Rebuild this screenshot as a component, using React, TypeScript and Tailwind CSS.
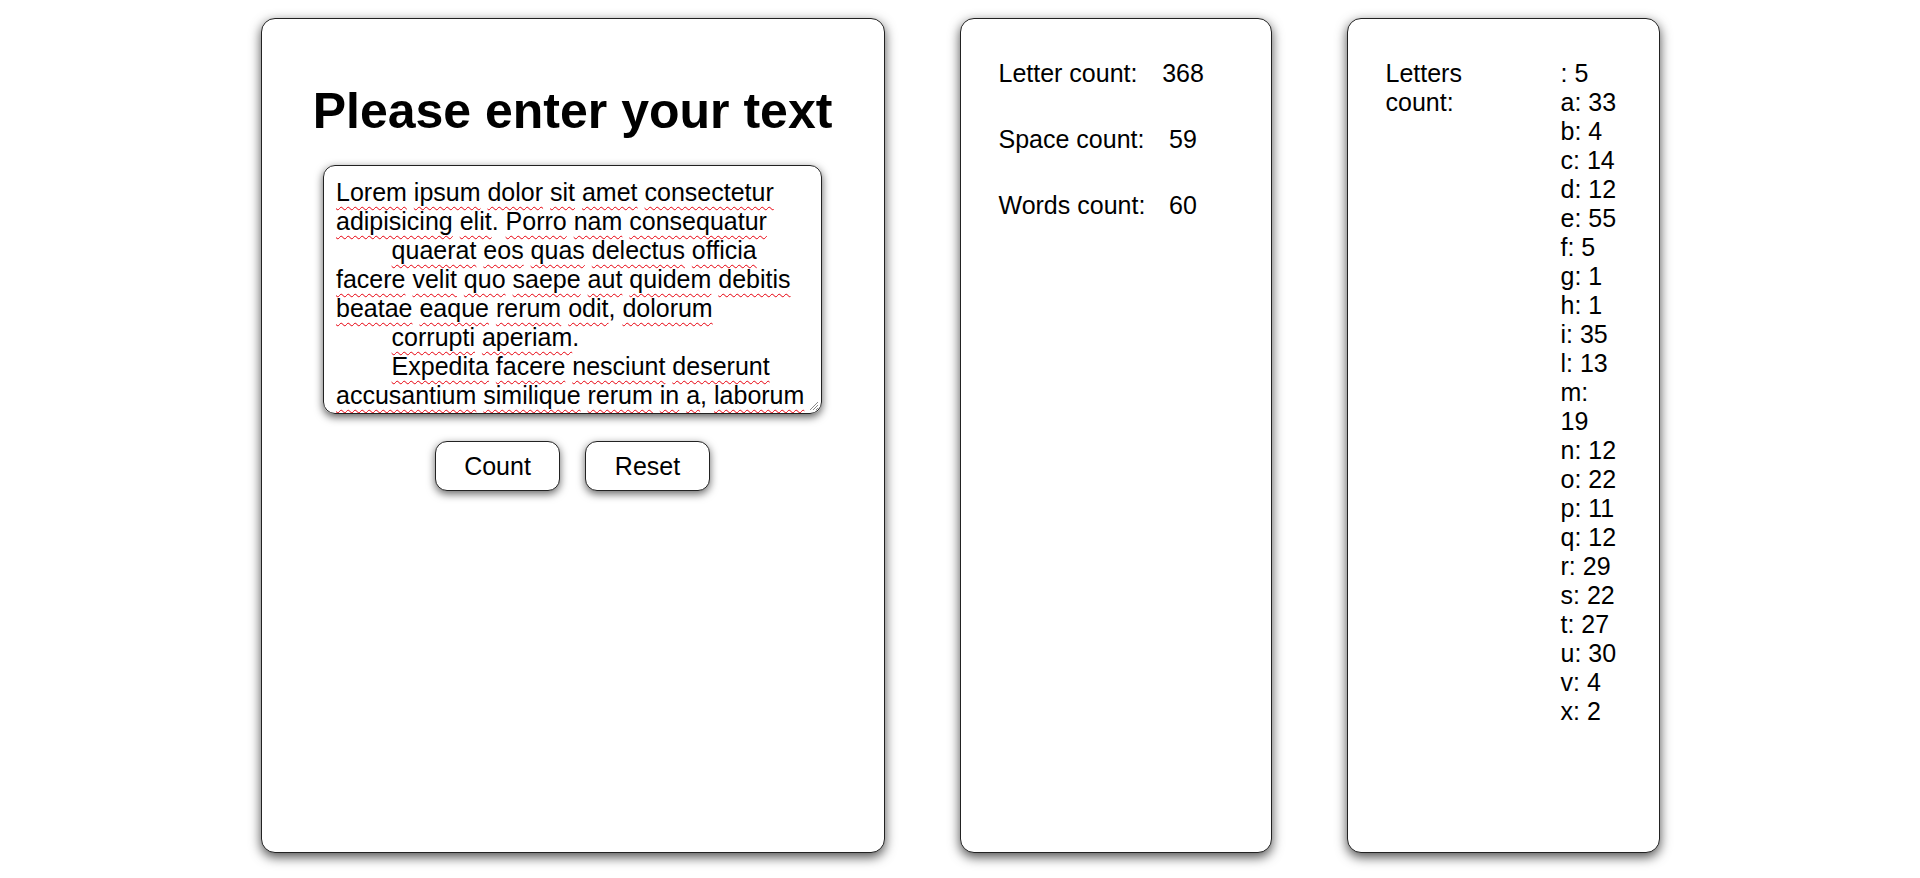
import { useState } from 'react';

const SAMPLE = `Lorem ipsum dolor sit amet consectetur adipisicing elit. Porro nam consequatur
        quaerat eos quas delectus officia facere velit quo saepe aut quidem debitis beatae eaque rerum odit, dolorum
        corrupti aperiam.
        Expedita facere nesciunt deserunt accusantium similique rerum in a, laborum vitae ad
        voluptatibus excepturi maxime explicabo.`;

type Counts = {
  letters: number;
  spaces: number;
  words: number;
  perLetter: [string, number][];
};

const INITIAL: Counts = {
  letters: 368,
  spaces: 59,
  words: 60,
  perLetter: [
    ['', 5],
    ['a', 33],
    ['b', 4],
    ['c', 14],
    ['d', 12],
    ['e', 55],
    ['f', 5],
    ['g', 1],
    ['h', 1],
    ['i', 35],
    ['l', 13],
    ['m', 19],
    ['n', 12],
    ['o', 22],
    ['p', 11],
    ['q', 12],
    ['r', 29],
    ['s', 22],
    ['t', 27],
    ['u', 30],
    ['v', 4],
    ['x', 2],
  ],
};

function countText(text: string): Counts {
  const map = new Map<string, number>();
  for (const ch of text.toLowerCase()) {
    if (/[a-z]/.test(ch)) map.set(ch, (map.get(ch) ?? 0) + 1);
  }
  const perLetter = [...map.entries()].sort((a, b) => a[0].localeCompare(b[0]));
  return {
    letters: perLetter.reduce((s, [, n]) => s + n, 0),
    spaces: (text.match(/ /g) ?? []).length,
    words: text.split(/\s+/).filter(Boolean).length,
    perLetter,
  };
}

// words get the red spell-check squiggle, punctuation and whitespace don't
function Squiggly({ text }: { text: string }) {
  const parts = text.split(/(\s+)/);
  return (
    <>
      {parts.map((part, i) => {
        if (/^\s*$/.test(part)) return <span key={i}>{part}</span>;
        const m = part.match(/^([A-Za-z]+)(.*)$/);
        if (!m) return <span key={i}>{part}</span>;
        return (
          <span key={i}>
            <span className="underline decoration-wavy decoration-red-600 decoration-1 underline-offset-[5px]">
              {m[1]}
            </span>
            {m[2]}
          </span>
        );
      })}
    </>
  );
}

export default function App() {
  const [results, setResults] = useState<Counts | null>(INITIAL);

  return (
    <div className="min-h-screen bg-white font-['Liberation_Sans',Arial,sans-serif] text-[25px] leading-[29px] text-black">
      <div className="flex justify-center gap-[75px] pt-[18px]">
        <section className="flex h-[835px] w-[624px] flex-col items-center rounded-[14px] border border-[#222] bg-white pt-[64px] shadow-[0_4px_12px_rgba(0,0,0,0.7)]">
          <h1 className="text-[50px] font-bold leading-[57px]">Please enter your text</h1>

          <div
            role="textbox"
            className="relative mt-[25px] h-[249px] w-[499px] overflow-hidden whitespace-pre-wrap rounded-[12px] border border-[#222] px-[12px] pt-[12px] shadow-[0_3px_9px_rgba(0,0,0,0.65)]"
          >
            <Squiggly text={SAMPLE} />
            <svg
              className="absolute bottom-[2px] right-[2px]"
              width="12"
              height="12"
              viewBox="0 0 12 12"
            >
              <path d="M11 3 L3 11 M11 6 L6 11 M11 9 L9 11" stroke="#8a8a8a" strokeWidth="1" />
            </svg>
          </div>

          <div className="mt-[27px] flex gap-[25px]">
            <button
              type="button"
              onClick={() => setResults(countText(SAMPLE))}
              className="h-[50px] w-[125px] rounded-[12px] border border-[#222] bg-white text-[25px] shadow-[0_3px_9px_rgba(0,0,0,0.6)]"
            >
              Count
            </button>
            <button
              type="button"
              onClick={() => setResults(null)}
              className="h-[50px] w-[125px] rounded-[12px] border border-[#222] bg-white text-[25px] shadow-[0_3px_9px_rgba(0,0,0,0.6)]"
            >
              Reset
            </button>
          </div>
        </section>

        <section className="h-[835px] w-[312px] rounded-[14px] border border-[#222] bg-white px-[38px] pt-[40px] shadow-[0_4px_12px_rgba(0,0,0,0.7)]">
          <div className="grid grid-cols-[150px_69px] gap-y-[37px]">
            <div className="whitespace-nowrap">Letter count:</div>
            <div className="text-center">{results?.letters ?? 0}</div>
            <div className="whitespace-nowrap">Space count:</div>
            <div className="text-center">{results?.spaces ?? 0}</div>
            <div className="whitespace-nowrap">Words count:</div>
            <div className="text-center">{results?.words ?? 0}</div>
          </div>
        </section>

        <section className="h-[835px] w-[313px] rounded-[14px] border border-[#222] bg-white px-[38px] pt-[40px] shadow-[0_4px_12px_rgba(0,0,0,0.7)]">
          <div className="flex justify-between">
            <div className="w-[110px]">Letters count:</div>
            <ul className="w-[60px]">
              {(results?.perLetter ?? []).map(([ch, n]) => (
                <li key={ch || 'blank'}>
                  {ch}: {n}
                </li>
              ))}
            </ul>
          </div>
        </section>
      </div>
    </div>
  );
}
